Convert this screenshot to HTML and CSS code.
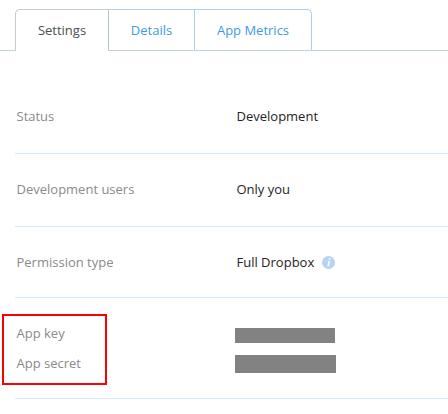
FILE: index.html
```html
<!DOCTYPE html>
<html lang="en">
<head>
    <meta charset="UTF-8">
    <title>App settings</title>
    <link rel="stylesheet" href="styles.css">
</head>
<body>
<ul class="tabs">
    <li class="tab active">Settings</li>
    <li class="tab tab-details">Details</li>
    <li class="tab tab-metrics">App Metrics</li>
</ul>
<div class="rows">
    <div class="row row-spaced">
        <div class="label">Status</div>
        <div class="value">Development</div>
    </div>
    <div class="row row-spaced">
        <div class="label">Development users</div>
        <div class="value">Only you</div>
    </div>
    <div class="row">
        <div class="label">Permission type</div>
        <div class="value">Full Dropbox
            <svg class="info" width="13" height="13" viewBox="0 0 13 13">
                <circle cx="6.5" cy="6.5" r="6.5" fill="#b5d3f3"/>
                <path d="M6.9 2.2h1.6l-.3 1.6H6.6zM6.3 5h1.7l-.9 5.2H5.4z" fill="#fff"/>
            </svg>
        </div>
    </div>
    <div class="row row-keys">
        <div class="key-line">
            <div class="label">App key</div>
            <div class="mask mask-key"></div>
        </div>
        <div class="key-line">
            <div class="label">App secret</div>
            <div class="mask mask-secret"></div>
        </div>
    </div>
</div>
<div class="highlight"></div>
</body>
</html>
```

FILE: styles.css
```css
body,div,ul,li{
    margin:0;
    padding:0;
}
ul{
    list-style-type:none;
}
body{
    background:#fff;
    font:13px/18px "Open Sans",sans-serif;
    color:#1f2326;
    overflow:hidden;
}
.tabs{
    display:flex;
    margin-top:9px;
    padding-left:15px;
    height:41px;
    border-bottom:1px solid #c3d2de;
}
.tab{
    height:41px;
    box-sizing:border-box;
    padding-top:11px;
    text-align:center;
    color:#3d9ae8;
    background:#fff;
    border:1px solid #a9d0f2;
    border-left:0;
    border-bottom:0;
}
.tab.active{
    width:94px;
    height:42px;
    color:#4a4f52;
    border-left:1px solid #c3ccd3;
    border-top-color:#c3ccd3;
    border-right-color:#b5c6d4;
    border-radius:5px 0 0 0;
    position:relative;
}
.tab-details{
    width:86px;
}
.tab-metrics{
    width:117px;
    border-radius:0 5px 0 0;
}
.rows{
    margin-left:15px;
    padding-top:30px;
}
.row{
    display:flex;
    align-items:center;
    height:70px;
    border-bottom:1px solid #d6e7f8;
}
.row-spaced{
    padding-bottom:2px;
}
.row-keys{
    display:block;
    height:auto;
    padding:20px 0;
}
.label{
    width:220px;
    padding-left:1.5px;
    box-sizing:border-box;
    color:#8a8a8a;
}
.value{
    display:flex;
    align-items:center;
    padding-left:1.5px;
}
.info{
    margin:1px 0 0 8px;
}
.key-line{
    display:flex;
    align-items:center;
    height:30px;
}
.mask{
    background:#828282;
}
.mask-key{
    width:100px;
    height:15px;
    margin-top:5px;
}
.mask-secret{
    width:101px;
    height:18px;
    margin-top:2px;
}
.highlight{
    position:absolute;
    left:2px;
    top:314px;
    width:105px;
    height:71px;
    box-sizing:border-box;
    border:2px solid #f00;
}
```
